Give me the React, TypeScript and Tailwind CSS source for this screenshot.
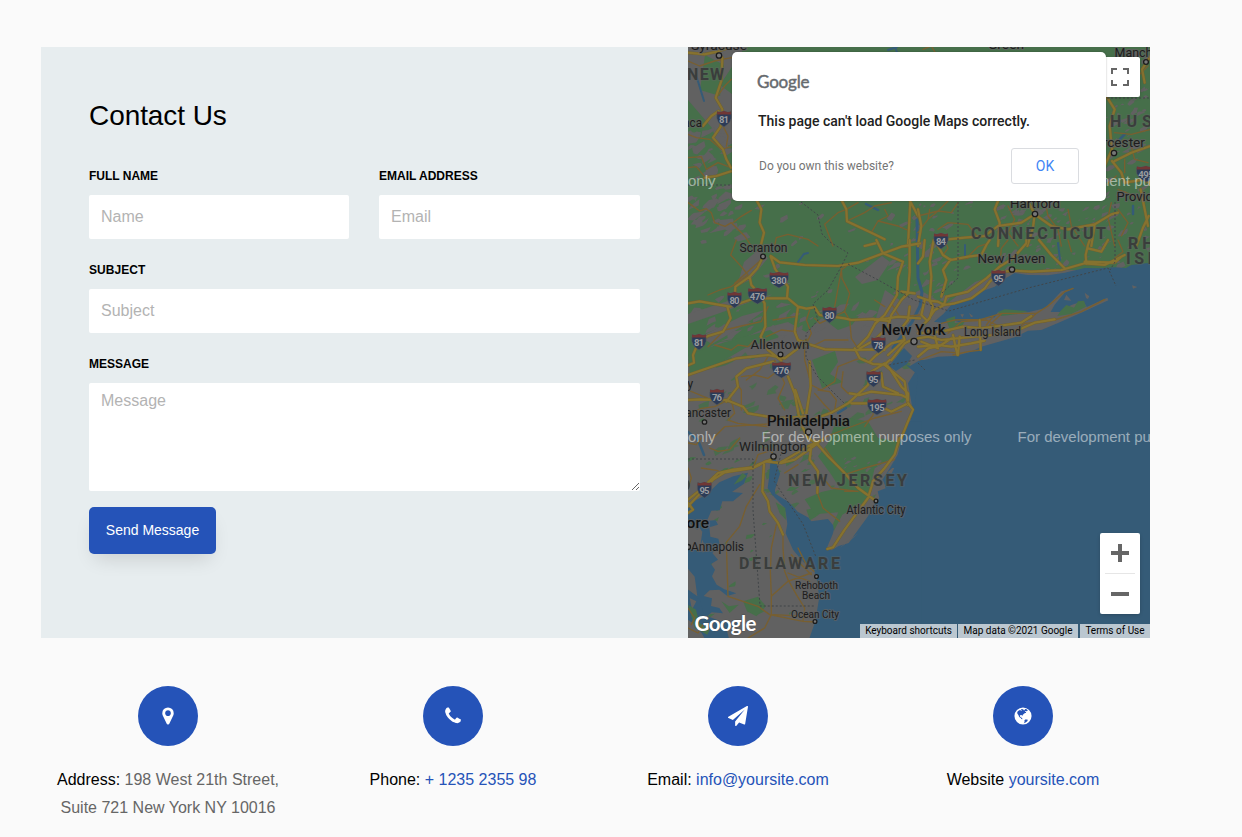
import React from "react";

const LAND = "#616161";
const GREEN = "#466f4a";
const WATER = "#355b77";
const MAJOR = "#86722f";
const MINOR = "#785f30";

/* Scattered farmland / woodland patches */
function rng(seed: number) {
  let s = seed;
  return () => {
    s = (s * 16807) % 2147483647;
    return s / 2147483647;
  };
}
function patches(seed: number, x: number, y: number, w: number, h: number, n: number, size: number) {
  const r = rng(seed);
  r();
  let d = "";
  for (let i = 0; i < n; i++) {
    const cx = x + r() * w;
    const cy = y + r() * h;
    const s = size * (0.35 + r());
    for (let k = 0; k < 6; k++) {
      const a = (k / 6) * Math.PI * 2 + r() * 0.8;
      const m = s * (0.3 + r());
      const px = Math.cos(a) * m * 1.3;
      const py = Math.sin(a) * m * 0.7 - px * 0.4;
      d += (k ? "L" : "M") + (cx + px).toFixed(1) + " " + (cy + py).toFixed(1);
    }
    d += "Z";
  }
  return d;
}

const tiles = {
  nw: "translate(688 46) scale(.33333)",
  ne: "translate(918 46) scale(.33333)",
  w: "translate(688 240) scale(.33333)",
  e: "translate(918 240) scale(.33333)",
  s: "translate(688 438) scale(.33333)",
};

function Roads({ at, major, minor }: { at: string; major: string; minor: string }) {
  return (
    <g transform={at} fill="none" strokeLinejoin="round" strokeLinecap="round">
      <path d={minor} stroke={MINOR} strokeWidth="4" />
      <path d={major} stroke="#6f6030" strokeWidth="9" />
      <path d={major} stroke={MAJOR} strokeWidth="6.5" />
    </g>
  );
}

function Shield({ x, y, n }: { x: number; y: number; n: string }) {
  const w = n.length > 2 ? 10 : 7.7;
  return (
    <g transform={`translate(${x} ${y})`}>
      <path
        d={`M${-w + 1} -7.5Q${-w / 2} -6 0 -8Q${w / 2} -6 ${w - 1} -7.5L${w - 0.5} -4Q${w + 0.6} 3 0 8Q${-w - 0.6} 3 ${-w + 0.5} -4Z`}
        fill="#2c3b57" stroke="#555b60" strokeWidth=".6"
      />
      <path d={`M${-w + 1} -7.5Q${-w / 2} -6 0 -8Q${w / 2} -6 ${w - 1} -7.5L${w - 0.6} -4.6H${-w + 0.6}Z`} fill="#713735" />
      <text y="3.9" textAnchor="middle" fontSize="9.5" fontWeight="700" fill="#999c9f" textLength={n.length > 2 ? 15.5 : 10}>{n}</text>
    </g>
  );
}

type LabelProps = { x: number; y: number; w?: number; size?: number; bold?: boolean; region?: boolean; children: string };
function Label({ x, y, w, size = 13, bold, region, children }: LabelProps) {
  return (
    <text
      x={x} y={y} fontSize={size} textLength={w} lengthAdjust={region ? "spacing" : "spacingAndGlyphs"}
      fontWeight={region ? 700 : bold ? 500 : 400}
      fill={region ? "#3a3d3c" : bold ? "#101010" : "#1d1d1d"}
      stroke={region ? "#61666166" : "#616161bb"} strokeWidth="2.2" paintOrder="stroke" strokeLinejoin="round"
    >
      {children}
    </text>
  );
}

const shields: [number, number, string][] = [
  [724, 119, "81"], [1146, 174, "495"], [941, 241, "84"], [779, 280, "380"], [734.5, 300, "80"],
  [757.5, 296, "476"], [829.5, 315, "80"], [699, 342, "81"], [878.5, 345, "78"], [781.5, 370, "476"],
  [873.5, 379, "95"], [717, 397, "76"], [877, 407, "195"], [998.5, 278, "95"], [704.5, 490, "95"],
];
const towns: [number, number, number][] = [
  [719, 55.5, 2.7], [1146, 62, 2.4], [1114, 153, 2.7], [1035, 214, 2.7], [763, 256.5, 2.4], [780.5, 354.5, 2.4],
  [1012, 269.5, 2.7], [914, 341.5, 3.1], [808.5, 432, 3], [704.5, 422, 2.2], [773.5, 456.5, 2.7], [876, 501, 1.9],
  [816.5, 576.5, 1.9], [815, 621.5, 1.9], [688, 547, 2.5],
];

function MapArt() {
  return (
    <svg viewBox="688 47 462 591" width="462" height="591" className="block" style={{ fontFamily: "Roboto, sans-serif" }}>
      <rect x="688" y="47" width="462" height="591" fill={LAND} />
      <g fill={GREEN}>
        <path d="M688 100L712 128 720 150 738 140 740 100 720 85 745 47H1150V270L1060 270 1010 270 975 282 945 305 920 290 900 300 885 290 876 318 862 312 852 325 838 330 822 318 806 332 788 322 765 328 744 338 720 342 700 352 688 356Z" />
        <path d={patches(11, 688, 352, 225, 160, 85, 5)} opacity=".85" />
        <path d={patches(31, 688, 445, 130, 185, 35, 3.6)} />
        <path d="M705 55L724 65 720 96 700 90ZM688 355L725 342 770 330 780 337 745 348 718 364 690 375ZM812 360L835 351 838 362 830 374 843 382 822 388 818 376Z" />
      </g>
      <g fill={LAND}>
        <path d={patches(7, 688, 195, 55, 42, 24, 7)} />
        <path d={patches(9, 688, 130, 45, 60, 22, 6)} />
        <path d={patches(17, 690, 290, 190, 50, 34, 5)} />
        <path d={patches(23, 700, 200, 190, 110, 16, 4)} />
        <path d={patches(29, 890, 200, 65, 150, 65, 4.5)} />
        <path d={patches(37, 1000, 200, 70, 75, 42, 4)} />
        <path d={patches(41, 1100, 50, 50, 220, 80, 4)} />
        <path d={patches(43, 940, 200, 180, 70, 35, 2.8)} />
        <path d="M688 314L728 301 750 302 720 313 688 324ZM700 337L742 316 765 310 743 326 712 344ZM855 277L882 256 890 262 878 280 862 284ZM744 262L758 250 768 258 750 280 737 286Z" />
      </g>
      {/* coast, sound and ocean */}
      <g transform={tiles.e} fill={WATER}>
        <path d="M700 68L640 75 624 84 590 82 540 85 500 84 440 98 390 106 330 105 290 99 260 116 230 140 200 151 150 178 104 190 76 222 48 245 82 250 92 237 130 248 160 239 230 232 240 216 330 217 380 205 405 181 430 154 470 145 440 158 410 194 398 216 425 216 460 195 496 183 506 201 545 184 568 173 571 181 490 218 420 249 370 270 330 272 290 292 190 320 160 335 110 348 60 350 8 363 -5 390 -30 430 0 600H700Z" />
      </g>
      <path d="M889 366L894 362 905 364 918 375 915 405 906 435V638H1150V360H920L910 366 897 362Z" fill={WATER} />
      <g transform={tiles.s} fill={WATER}>
        <path d="M700 -50H665L642 0 629 50 602 96 583 125 593 151 569 160 574 180 552 208 540 235 505 283 482 315 452 324 430 337 416 331 434 289 440 267 420 243 370 250 362 239 329 221 302 192 262 167 256 123 268 85 248 84 239 150 259 178 287 206 294 227 298 258 293 286 315 335 345 371 378 397 389 435 393 483 382 550 361 610H700Z" />
        <path d="M0 210L20 188 55 170 94 133 136 115 180 104 168 137 132 162 165 165 135 190 103 190 95 217 70 218 57 248 83 247 90 260 64 268 67 296 91 302 96 322 73 345 90 365 69 378 81 395 72 415 86 440 109 454 145 466 118 474 94 455 65 457 47 474 72 481 69 504 94 510 105 526 71 523 58 535 103 551 151 556 116 575 125 610H55L31 568 0 545V455L28 475 20 416 0 392V330L35 338 43 281 26 258 0 244Z" />
        <path d="M246 82L257 39 268 85 276 107 255 174 242 152Z" />
        <path d="M0 455L36 485 50 540 40 585 10 540ZM188 495L196 512 185 522Z" />
      </g>
      <g transform={tiles.s} fill={LAND}>
        <path d="M565 170L555 200 548 217 559 200ZM512 285L485 309 455 330 480 308ZM585 128L592 143 575 153ZM43 305L51 325 45 346 38 325ZM5 480L25 490 12 515Z" />
        <path d="M355 215L380 210 398 225 384 236 366 247Z" fill={GREEN} />
        <path d="M390 55L420 15 440 -40 480 -60 540 -50 570 0 640 12 616 57 560 91 536 189 463 230 438 278 435 258 451 223 380 229 350 184 400 162 455 150 430 110Z" fill={GREEN} />
        <path d={patches(51, 470, 50, 140, 90, 14, 8)} />
      </g>
      <g transform={tiles.s} fill={GREEN}>
        <path d="M263 193L292 210 294 246 275 226ZM163 105L176 113 161 128 137 140ZM165 490L210 476 234 505 205 535 177 520ZM100 490L123 505 152 500 125 525ZM0 500L24 515 34 555 65 575 58 590 20 570Z" />
      </g>
      <g transform={tiles.e}>
        <path d="M84 238L112 228 110 250 141 244 130 262 95 267ZM240 216L260 208 330 213 300 222 250 228ZM428 212L445 195 468 203 480 184 498 182 504 200 460 222 418 228Z" fill={GREEN} />
        <path d="M438 180L445 164 460 182ZM500 158L514 169 510 177 504 174ZM642 136L658 141 645 146ZM127 223L138 223 133 233ZM153 219L166 229 159 232Z" fill={LAND} />
      </g>
      {/* rivers and lakes */}
      <g fill="none" stroke={WATER} strokeLinecap="round">
        <path d="M893 348L903 334 912 322 920 306 922 292 918 278 917 220" strokeWidth="3" />
        <path d="M697 78L704 101M895 47L900 60M888 50L897 47M798 262L804 254 808 253M965 255V245M1060 260L1058 243" strokeWidth="2" />
        <path d="M688 432L698 440 704 455M838 413L846 408M866 204L878 210M1120 139L1125 134M1133 206L1133 214M688 520L697 528 704 520" strokeWidth="2.5" />
      </g>
      <path d="M889 366L904 348 912 356 907 364 896 371Z" fill={WATER} />
      <Roads
        at={tiles.nw}
        major="M0 20L50 25 82 18 115 8M103 35L100 105 83 155 103 190 98 242 75 275 105 310 115 340 129 365M50 395L85 390 129 376M207 465L220 490 215 530 228 560 218 600M462 465L475 490 477 526 550 560 590 580M667 465L660 600M45 240L70 210 92 195M530 600L570 590M666 465L690 510"
        minor="M0 45L35 60 80 45 130 35M85 155L110 120 130 100M0 265L25 275 65 280 100 310 129 302M0 335L40 332 55 370 90 350 129 365M0 470L35 495 55 488 70 500 80 530 111 541 130 530 170 570 190 600M190 493L160 511 135 530M260 600L265 575 300 565 360 580 390 600M410 535L450 500 475 490 510 470M410 535L435 600M475 526L530 500 560 480 610 470M550 560L570 525 600 510 590 490M570 525L630 540 665 555M105 240L120 270 115 300M0 365L25 362 48 390"
      />
      <Roads
        at={tiles.ne}
        major="M565 150L590 190 575 240 582 310 560 360M582 345L610 380 620 410M350 505L345 545 328 600M350 505L400 540 450 550 530 535 580 505 600 500M350 505L330 465M530 535L520 600M350 505L310 530 240 540 200 570 140 575 90 580M620 410L680 400 698 415M655 600L675 545 692 510M668 430L690 540M590 345L640 320 698 300M240 465L230 490 245 530 240 600M698 30L672 70 680 110M0 490L10 540 0 600"
        minor="M15 10L40 0 55 25M0 560L30 520 35 490M120 470L100 500 60 495 30 520M60 550L90 530 150 535 180 575M270 480L290 520 270 560 300 600M382 470L390 510 420 550 430 600M450 490L460 540 500 600M580 470L570 515 590 600M595 390L560 420M620 340L620 380M640 300L650 340 690 350M590 260L640 265 698 250M580 310L620 280M600 430L660 455M600 490L630 530 610 570M690 60L650 100M0 510L60 495 90 465"
      />
      <Roads
        at={tiles.w}
        major="M0 190L35 184 125 200 200 175 300 175 330 200 355 206 380 202 395 225 470 235 490 240 555 237 600 243M118 200L128 235 105 275 60 288 30 310 15 345 18 368 0 376M225 50L208 85 185 110 142 140 140 180M208 85L185 110 190 135 208 155 230 190 232 260 218 290 240 330 280 362M248 48L275 67 350 75 450 78 510 68 580 42 640 20 696 10M248 50L262 88 300 140 297 172M330 200L320 275 330 300 355 310 410 328 500 330 560 328 590 330M355 300L330 325 290 355 240 345 145 355 0 405M500 325L515 355 555 372 590 374 605 360M565 0L585 40 645 65 630 110 627 165 590 225 562 250 540 290 510 320M665 0V95L660 160 640 180 610 225 600 260 560 300 515 325M640 155L680 160M300 410L320 460 335 540M322 450L345 520M365 365L368 440 355 520M0 480L35 478 115 480 165 500 180 520 270 535 350 530M115 485L150 440 145 410 175 385 255 365M370 540L430 518 480 490 540 435 550 395 590 370 605 385 640 440 660 460 660 490 610 515 560 490 490 490M485 460L515 465 550 455 640 465 660 475M600 345L650 300 640 265 660 240 665 200M610 360L650 310 670 300M560 240L600 235 630 230 696 235M545 365L560 350 610 310 650 300M590 375L650 425 660 495M580 400L585 440 630 460"
        minor="M145 0L128 45 160 80 180 105 130 140 95 150 60 165M225 55L140 130M440 200L460 90 475 78M460 85L462 115 485 160 470 215 395 250 380 235M470 215L485 240 490 295 510 325M60 320L80 300 110 270 160 258 220 245 240 200M255 240L320 230M235 290L280 270 325 275M80 315L130 330 150 315 180 320 200 300M355 310L370 280 355 240 365 210M350 310L350 360 370 435 400 450 440 425M440 425L450 380 500 360 515 355M370 320L410 300 480 300M390 450L425 455 445 480 440 510M0 525L40 505 80 500 110 485M125 465L140 520 120 540 150 550 240 560M160 510L160 450 145 430M70 600L110 560 240 552M160 410L200 405 240 415 260 400M240 350L215 390 175 420M380 460L410 495 430 515M465 395L460 440 480 460M0 450L60 475M260 360L290 430 270 475 290 510M560 180L590 200M610 190L635 230 696 225M560 490L555 525 530 560"
      />
      <Roads
        at={tiles.e}
        major="M0 170L35 182 45 200 35 235 0 270M35 182L60 185 78 195 110 190 160 175 200 145 215 125 250 95 290 92 340 95 430 90 500 70 560 75 620 45M78 195L85 170 150 155 205 115 245 80 285 55 325 10M325 10V0M440 85L400 45 363 0M505 72L503 45 510 15 515 0M510 25L550 35 570 0M50 0L75 45 98 60 150 50 190 45 205 15 215 0M98 58L75 90 85 120 70 170M47 0L35 65 40 110 35 180M0 280L70 275 135 260 190 265 240 258 310 248 340 228M0 295L30 290 70 300 145 292 225 285 300 270 350 248 410 238M105 285L118 345M125 290L120 345M185 240L188 330M0 320L60 315 100 320 160 310 200 302M30 240L50 210 78 195M20 0L15 50 0 70M10 305L60 325 50 285 30 270M20 180L10 225 25 240M500 65L590 68 610 50M0 350L30 325 65 318 100 295"
        minor="M80 0L90 25 75 45M150 50L180 20 210 10M245 80L250 25 270 0M105 60L150 55M70 250L110 240 190 238 250 220 355 220 390 198 440 155 465 145M90 280L130 245 205 240 245 260M250 222L215 255 245 280 295 268 320 250 385 245M105 345L150 335 190 330M5 360L70 335 110 338M450 0L460 35M600 0L615 35 590 55M225 230L205 255M355 220L340 235 300 250M410 240L490 215 560 178"
      />
      <Roads
        at={tiles.s}
        major="M0 205L75 125 110 103 195 90 215 80 232 70 275 75 310 55 360 25 405 5M228 80L223 160 240 190 245 220 270 255 285 290M0 185L35 157 90 105 135 95 195 88M418 333L435 328 470 275 540 180 555 130 590 90 620 50 635 0M565 190L510 150 465 100 420 55 385 15M370 20L365 65 390 100 388 165M280 75L320 65 390 15M195 90L210 80 260 60M0 195L15 215 0 225M640 0L660 -50 675 -85 660 -105M385 15L360 0 340 -40 350 -65"
        minor="M0 15L25 20 40 0M0 150L10 120 0 90M40 90L90 98M65 30L90 40 125 35 155 0M195 90L210 50 240 40M215 140L175 205 155 265 115 313 120 475 210 505 245 530 345 550M265 260L250 330 247 400 250 475 250 530 230 570 180 600M285 290L285 330 290 400 300 425 325 470 350 510 345 550M300 405L365 430M250 475L300 430 370 405M310 350L370 410M330 330L355 380 378 400M388 165L405 210 455 250M470 110L530 90 620 65M470 160L510 160M405 120L430 150 510 160M255 530L360 535M345 550L380 552M290 105L330 80M405 0L480 -30 560 -60 640 -80M255 45L225 25M410 30L465 105M45 560L30 585 0 570M0 510L20 540 10 560"
      />
      {/* state borders and ferry lines */}
      <g fill="none" stroke="#414548" strokeWidth="1" strokeDasharray="2 2">
        <path d="M688 185H737M801 202L818 215 822 234 830 242 848 253 841 267 828 290 813 304 818 320 806 334 806 357 817 376 845 404M848 264L880 281 914 300 949 311 1032 287 1108 268 1116 286M958 202V278L942 293M1115 202V262M1107 98H1150M688 459H753L753 510 760 606H814M781 454L774 481 788 502 803 524 816 557M918 363L925 370M889 365L915 360M1115 262L1110 270" />
      </g>
      {shields.map(([x, y, n]) => <Shield key={x + "-" + y} x={x} y={y} n={n} />)}
      <g fill="#777" stroke="#1c1c1c" strokeWidth="1.3">
        {towns.map(([x, y, r]) => <circle key={x + "-" + y} cx={x} cy={y} r={r} />)}
      </g>
      <Label x={691} y={50} size={13.5} w={56}>Syracuse</Label>
      <Label x={988} y={49} size={13.5} w={36}>Green</Label>
      <Label x={1114.5} y={57} w={66}>Manchester</Label>
      <Label x={670} y={126.5} w={32}>Ithaca</Label>
      <Label x={687} y={80} size={16} w={37} region>NEW</Label>
      <Label x={1110} y={127} size={16} w={56} region>HUSE</Label>
      <Label x={1083} y={147} size={13.5} w={62}>Worcester</Label>
      <Label x={1116.5} y={201} size={13.5} w={64}>Providence</Label>
      <Label x={1010} y={208} size={13.5} w={50}>Hartford</Label>
      <Label x={971} y={238.5} size={16} w={135} region>CONNECTICUT</Label>
      <Label x={1128} y={248.5} size={16} w={68} region>RHODE</Label>
      <Label x={1126} y={264} size={16} w={74} region>ISLAND</Label>
      <Label x={739.5} y={252} w={48}>Scranton</Label>
      <Label x={977.5} y={263} size={13.5} w={68}>New Haven</Label>
      <Label x={964} y={336} size={12} w={57}>Long Island</Label>
      <Label x={881.5} y={335} size={15.5} w={64} bold>New York</Label>
      <Label x={750.5} y={349} size={13.5} w={59}>Allentown</Label>
      <Label x={767} y={425.5} size={15.5} w={83} bold>Philadelphia</Label>
      <Label x={679} y={417} size={12.5} w={52}>Lancaster</Label>
      <Label x={683} y={388} size={12.5}>ry</Label>
      <Label x={739} y={450.5} size={13.5} w={68}>Wilmington</Label>
      <Label x={680} y={490.5} size={16} region>D</Label>
      <Label x={788} y={485.5} size={16} w={119} region>NEW JERSEY</Label>
      <Label x={846.5} y={514} size={12} w={59}>Atlantic City</Label>
      <Label x={642} y={528} size={15} w={67} bold>Baltimore</Label>
      <Label x={691} y={551} size={12.5} w={53}>Annapolis</Label>
      <Label x={739} y={569} size={16} w={101} region>DELAWARE</Label>
      <Label x={795} y={588.5} size={11} w={43}>Rehoboth</Label>
      <Label x={802} y={598.5} size={11} w={28}>Beach</Label>
      <Label x={791} y={617.5} size={11} w={48}>Ocean City</Label>
      <g fill="#fff" fillOpacity=".5" fontSize="15" style={{ fontFamily: "'Liberation Sans', Arial, sans-serif" }}>
        {[505.5, 761.5, 1017.5].map((x) =>
          [186, 442].map((y) => (
            <text key={x + "-" + y} x={x} y={y} textLength="210">For development purposes only</text>
          )),
        )}
      </g>
      <text x="694.5" y="630.5" fontSize="20.5" fontWeight="700" textLength="62" fill="#fff" stroke="#4448" strokeWidth="1" paintOrder="stroke" style={{ fontFamily: "Lato, sans-serif" }}>Google</text>
    </svg>
  );
}

function MapPanel() {
  return (
    <section className="relative h-[591px] w-[462px] overflow-hidden">
      <MapArt />
      <button className="absolute right-[10px] top-[10px] flex size-10 items-center justify-center rounded-[2px] bg-white shadow-[0_1px_4px_-1px_rgba(0,0,0,0.3)]" aria-label="Toggle fullscreen view">
        <svg width="18" height="18" viewBox="0 0 18 18" fill="#666">
          <path d="M0 0v6h2V2h4V0H0zm16 0h-4v2h4v4h2V0h-2zm0 16h-4v2h6v-6h-2v4zM2 12H0v6h6v-2H2v-4z" />
        </svg>
      </button>
      <div className="absolute left-[44px] top-[5px] flex h-[149px] w-[374px] flex-col rounded-[5px] bg-white px-[26px] pt-[18px] font-[Roboto,sans-serif] shadow-[0_0_2px_rgba(0,0,0,0.3)]">
        <svg width="54" height="26" viewBox="0 0 54 26" className="-ml-px" aria-hidden="true">
          <text x="0" y="17.5" fontSize="17" fontWeight="400" textLength="52.5" fill="#666a6e" stroke="#666a6e" strokeWidth=".45" style={{ fontFamily: "Lato, sans-serif" }}>Google</text>
        </svg>
        <p className="mt-[15px] whitespace-nowrap text-[14px] font-medium leading-5 text-[#212121]">This page can't load Google Maps correctly.</p>
        <div className="-mr-[1px] mt-[17px] flex items-center justify-between pr-[2px]">
          <a className="pl-px text-[12px] text-[#757575]">Do you own this website?</a>
          <button className="h-9 w-[68px] rounded-[3px] border border-[#dadce0] text-[14px] text-[#4285f4]">OK</button>
        </div>
      </div>
      <div className="absolute bottom-[24px] right-[10px] flex h-[81px] w-10 flex-col items-center rounded-[2px] bg-white shadow-[0_1px_4px_-1px_rgba(0,0,0,0.3)]">
        <button className="flex h-10 items-center" aria-label="Zoom in">
          <svg width="18" height="18" viewBox="0 0 18 18" fill="#666"><path d="M7 0h4v7h7v4h-7v7H7v-7H0V7h7z" /></svg>
        </button>
        <div className="h-px w-[30px] bg-[#e6e6e6]" />
        <button className="flex h-10 items-center" aria-label="Zoom out">
          <svg width="18" height="18" viewBox="0 0 18 18" fill="#666"><path d="M0 7h18v4H0z" /></svg>
        </button>
      </div>
      <div className="absolute bottom-0 right-0 flex h-[14px] gap-px whitespace-nowrap font-[Roboto,sans-serif] text-[10px] leading-[14px] text-black">
        <span className="w-[97px] bg-[#bbc7d0] text-center">Keyboard shortcuts</span>
        <span className="w-[120px] bg-[#bbc7d0] text-center">Map data ©2021 Google</span>
        <span className="ml-px w-[70px] bg-[#bbc7d0] text-center">Terms of Use</span>
      </div>
    </section>
  );
}

const inputClass =
  "block w-full rounded-[2px] bg-white px-3 text-[16px] text-[#4d4d4d] outline-none placeholder:text-[#b3b3b3]";

function Field({ label, tracking = "tracking-normal", children }: { label: string; tracking?: string; children: React.ReactNode }) {
  return (
    <label className="block">
      <span className={`mb-[10px] block whitespace-nowrap text-[12px] font-bold uppercase leading-[18px] text-black ${tracking}`}>{label}</span>
      {children}
    </label>
  );
}

function ContactForm() {
  return (
    <section className="h-[591px] w-[647px] bg-[#e7edef] px-12 pt-[48px]">
      <h3 className="text-[28px] leading-[42px] tracking-[-0.08px] text-black">Contact Us</h3>
      <form className="mt-[30px] flex flex-col" onSubmit={(e) => e.preventDefault()}>
        <div className="grid grid-cols-[260px_261px] gap-[30px]">
          <Field label="Full Name"><input className={`${inputClass} h-11`} placeholder="Name" /></Field>
          <Field label="Email Address"><input className={`${inputClass} h-11`} placeholder="Email" /></Field>
        </div>
        <div className="mt-[22px]">
          <Field label="Subject" tracking="tracking-[0.05px]"><input className={`${inputClass} h-11`} placeholder="Subject" /></Field>
        </div>
        <div className="mt-[22px]">
          <Field label="Message"><textarea className={`${inputClass} h-[108px] resize-y pt-[6px]`} placeholder="Message" /></Field>
        </div>
        <button className="mt-4 h-[47px] w-[127px] rounded-[5px] bg-[#2553b8] text-[14px] text-white shadow-[0_10px_20px_-6px_rgba(0,0,0,0.14)]">Send Message</button>
      </form>
    </section>
  );
}

const icons = {
  marker: "M1152 640q0-106-75-181t-181-75-181 75-75 181 75 181 181 75 181-75 75-181zm256 0q0 109-33 179l-364 774q-16 33-47.5 52t-67.5 19-67.5-19-46.5-52l-365-774q-33-70-33-179 0-212 150-362t362-150 362 150 150 362z",
  phone: "M1600 1240q0 27-10 70.5t-21 68.5q-21 50-122 106-94 51-186 51-27 0-53-3.5t-57.5-12.5-47-14.5-55.5-20.5-49-18q-98-35-175-83-127-79-264-216t-216-264q-48-77-83-175-3-9-18-49t-20.5-55.5-14.5-47-12.5-57.5-3.5-53q0-92 51-186 56-101 106-122 25-11 68.5-21t70.5-10q14 0 21 3 18 6 53 76 11 19 30 54t35 63.5 31 53.5q3 4 17.5 25t21.5 35.5 7 28.5q0 20-28.5 50t-62 55-62 53-28.5 46q0 9 5 22.5t8.5 20.5 14 24 11.5 19q76 137 174 235t235 174q2 1 19 11.5t24 14 20.5 8.5 22.5 5q18 0 46-28.5t53-62 55-62 50-28.5q14 0 28.5 7t35.5 21.5 25 17.5q25 15 53.5 31t63.5 35 54 30q70 35 76 53 3 7 3 21z",
  plane: "M1764 11q33 24 27 64l-256 1536q-5 29-32 45-14 8-31 8-11 0-24-5l-453-185-242 295q-18 23-49 23-13 0-22-4-19-7-30.5-23.5t-11.5-36.5v-349l864-1059-1069 925-395-162q-37-14-40-55-2-40 32-59l1664-960q15-9 32-9 20 0 36 11z",
  globe: "M896 128a768 768 0 1 1 0 1536 768 768 0 1 1 0-1536zM490 420l-110 120 15 150 90 110 70 180 150 90 40 100 100 20-20-100-90-40 10-90-90 20-50-80 70-90 130 20 30 90 30-120 120-110 100-60 90 0-20-90-100-30 80-70 100 40 90-60-100-120-150-40-30 100-60 40-60-80-120-50-110 20 100 80-40 60-130-70zM1090 1220l-70 90 20 130-80 100 130-40 190-130 50-130-110-40z",
};

function ContactItem({ icon, label, children, className = "" }: { icon: string; label: string; children: React.ReactNode; className?: string }) {
  return (
    <div className="flex w-[285px] flex-col items-center text-center">
      <div className="flex size-[60px] items-center justify-center rounded-full bg-[#2553b8]">
        <svg width="20" height="20" viewBox="0 0 1792 1792" fill="white" fillRule="evenodd"><path d={icon} /></svg>
      </div>
      <p className={`mt-[20px] text-[16px] leading-[28px] text-[#666] ${className}`}>
        <span className="text-black">{label}</span> {children}
      </p>
    </div>
  );
}

export default function App() {
  return (
    <main className="h-[837px] w-[1242px] overflow-hidden bg-[#fafafa] pt-[47px] font-['Liberation_Sans',Arial,sans-serif]">
      <div className="ml-[41px] flex w-[1109px]">
        <ContactForm />
        <MapPanel />
      </div>
      <div className="ml-[25.5px] mt-12 flex">
        <ContactItem icon={icons.marker} label="Address:" className="w-[240px]">198 West 21th Street, Suite 721 New York NY 10016</ContactItem>
        <ContactItem icon={icons.phone} label="Phone:"><a className="text-[#2553b8]">+ 1235 2355 98</a></ContactItem>
        <ContactItem icon={icons.plane} label="Email:"><a className="text-[#2553b8]">info@yoursite.com</a></ContactItem>
        <ContactItem icon={icons.globe} label="Website"><a className="text-[#2553b8]">yoursite.com</a></ContactItem>
      </div>
    </main>
  );
}
